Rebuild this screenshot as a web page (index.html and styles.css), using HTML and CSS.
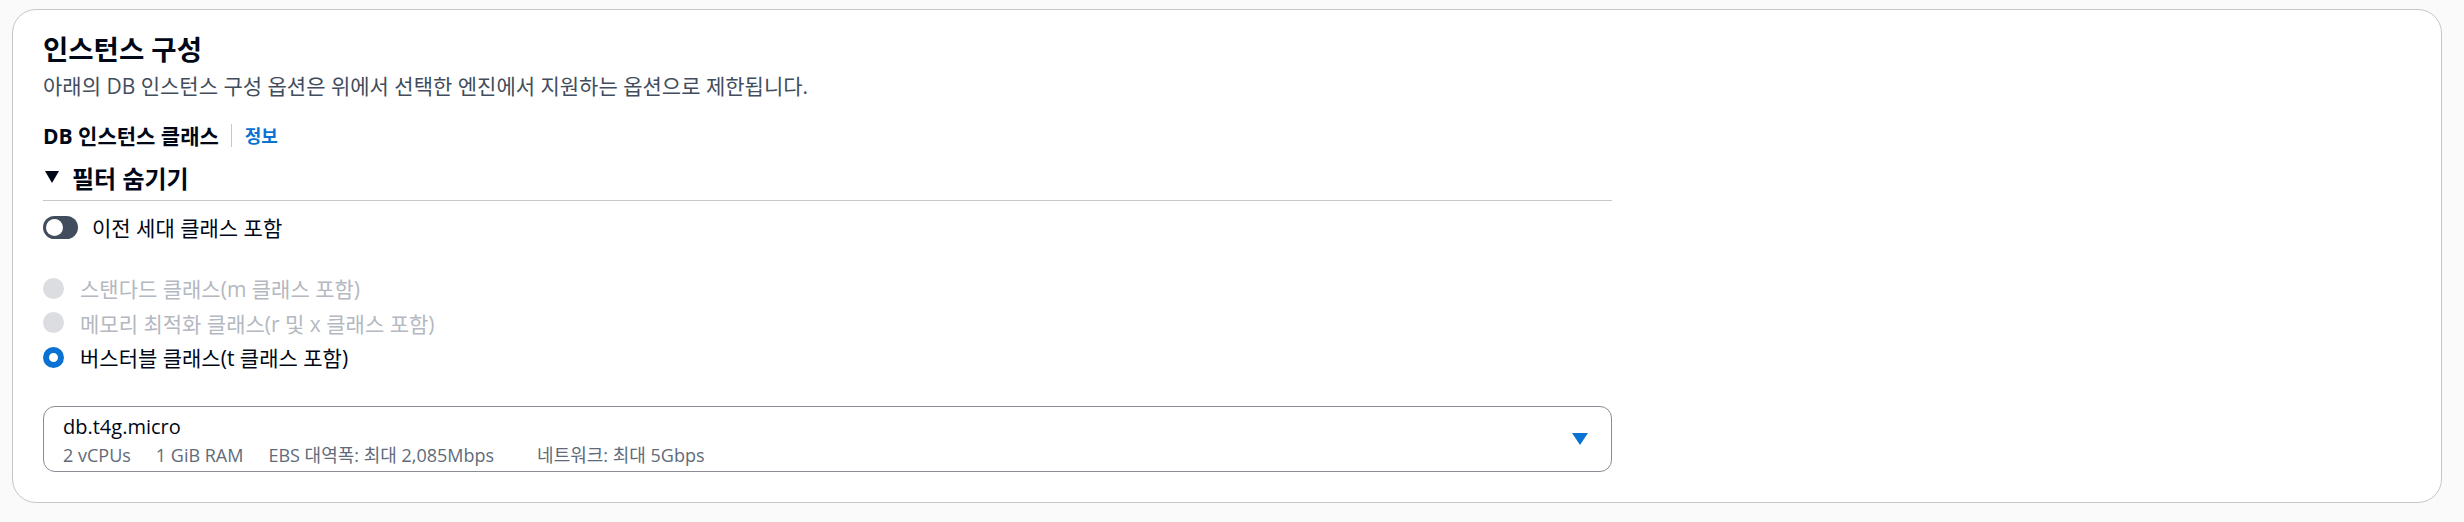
FILE: index.html
```html
<!DOCTYPE html>
<html lang="ko">
<head>
    <meta charset="UTF-8">
    <meta name="viewport" content="width=device-width, initial-scale=1.0">
    <title>인스턴스 구성</title>
    <link rel="stylesheet" href="styles.css">
</head>
<body>
    <!-- Instance configuration container -->
    <div class="container">
        <h2 class="title">인스턴스 구성</h2>
        <p class="description">아래의 DB 인스턴스 구성 옵션은 위에서 선택한 엔진에서 지원하는 옵션으로 제한됩니다.</p>

        <div class="form-area">
            <div class="field-label">
                <span class="label-text">DB 인스턴스 클래스</span>
                <span class="label-divider"></span>
                <a href="#" class="info-link">정보</a>
            </div>

            <div class="filter-header">
                <span class="filter-caret"></span>
                <span>필터 숨기기</span>
            </div>

            <div class="filter-body">
                <label class="toggle-row">
                    <span class="toggle"><span class="toggle-knob"></span></span>
                    <span>이전 세대 클래스 포함</span>
                </label>

                <div class="radio-group">
                    <label class="radio-row disabled">
                        <span class="radio"></span>
                        <span>스탠다드 클래스(m 클래스 포함)</span>
                    </label>
                    <label class="radio-row disabled">
                        <span class="radio"></span>
                        <span>메모리 최적화 클래스(r 및 x 클래스 포함)</span>
                    </label>
                    <label class="radio-row">
                        <span class="radio checked"></span>
                        <span>버스터블 클래스(t 클래스 포함)</span>
                    </label>
                </div>
            </div>

            <div class="select">
                <div class="select-value">
                    <div class="option-label">db.t4g.micro</div>
                    <div class="option-tags">
                        <span>2 vCPUs</span>
                        <span>1 GiB RAM</span>
                        <span>EBS 대역폭: 최대 2,085Mbps</span>
                        <span class="tag-wide">네트워크: 최대 5Gbps</span>
                    </div>
                </div>
                <svg class="select-caret" width="16" height="12" viewBox="0 0 16 12">
                    <polygon points="0,0 16,0 8,12" fill="#0972d3"/>
                </svg>
            </div>
        </div>
    </div>
</body>
</html>
```

FILE: styles.css
```css
body {
    margin: 0;
    padding: 9px 22px 19px 12px;
    background-color: #fafafa;
    color: #000716;
    font-family: "Open Sans", "Noto Sans CJK KR", sans-serif;
    font-size: 21px;
}
.container {
    background-color: #ffffff;
    border: 1px solid #c6c6cd;
    border-radius: 24px;
    padding: 22px 30px 30px 30px;
}
.title {
    margin: 0;
    font-size: 27.5px;
    line-height: 36px;
    font-weight: 700;
}
.description {
    margin: 3px 0 0 0;
    line-height: 30px;
    color: #414d5c;
}
.form-area {
    max-width: 1569px;
}
.field-label {
    display: flex;
    align-items: center;
    margin-top: 19px;
    height: 30px;
}
.label-text {
    font-size: 21px;
    font-weight: 700;
}
.label-divider {
    width: 1px;
    height: 23px;
    background-color: #c6c6cd;
    margin: 0 13px 0 12px;
}
.info-link {
    color: #0972d3;
    font-size: 18px;
    font-weight: 700;
    text-decoration: none;
}
.filter-header {
    display: flex;
    align-items: center;
    gap: 13px;
    margin-top: 12px;
    height: 30px;
    font-size: 24px;
    font-weight: 700;
    padding-bottom: 8px;
    border-bottom: 1px solid #c6c6cd;
}
.filter-caret {
    width: 0;
    height: 0;
    margin-left: 2px;
    border-left: 7.5px solid transparent;
    border-right: 7.5px solid transparent;
    border-top: 12px solid #000716;
}
.toggle-row {
    display: flex;
    align-items: center;
    gap: 14px;
    margin-top: 11px;
    height: 30px;
}
.toggle {
    display: flex;
    align-items: center;
    width: 35px;
    height: 23px;
    border-radius: 12px;
    background-color: #414d5c;
    box-sizing: border-box;
    padding-left: 3px;
}
.toggle-knob {
    width: 17px;
    height: 17px;
    border-radius: 50%;
    background-color: #ffffff;
}
.radio-group {
    display: flex;
    flex-direction: column;
    gap: 4.5px;
    margin-top: 31px;
}
.radio-row {
    display: flex;
    align-items: center;
    gap: 16px;
    height: 30px;
}
.radio {
    width: 21px;
    height: 21px;
    border-radius: 50%;
    box-sizing: border-box;
    background-color: #dcdde1;
}
.radio.checked {
    background-color: #ffffff;
    border: 6.5px solid #0972d3;
}
.radio-row.disabled {
    color: #b4b8c0;
}
.select {
    display: flex;
    align-items: center;
    justify-content: space-between;
    margin-top: 34px;
    height: 66px;
    box-sizing: border-box;
    border: 1px solid #8c8c94;
    border-radius: 12px;
    padding: 7px 23px 3px 19px;
}
.option-label {
    font-size: 20px;
    line-height: 26px;
}
.option-tags {
    display: flex;
    gap: 25px;
    margin-top: 2px;
    font-size: 18px;
    line-height: 26px;
    color: #5f6b7a;
}
.tag-wide {
    margin-left: 18px;
}
.select-caret {
    display: block;
    margin-bottom: 4px;
}
```
